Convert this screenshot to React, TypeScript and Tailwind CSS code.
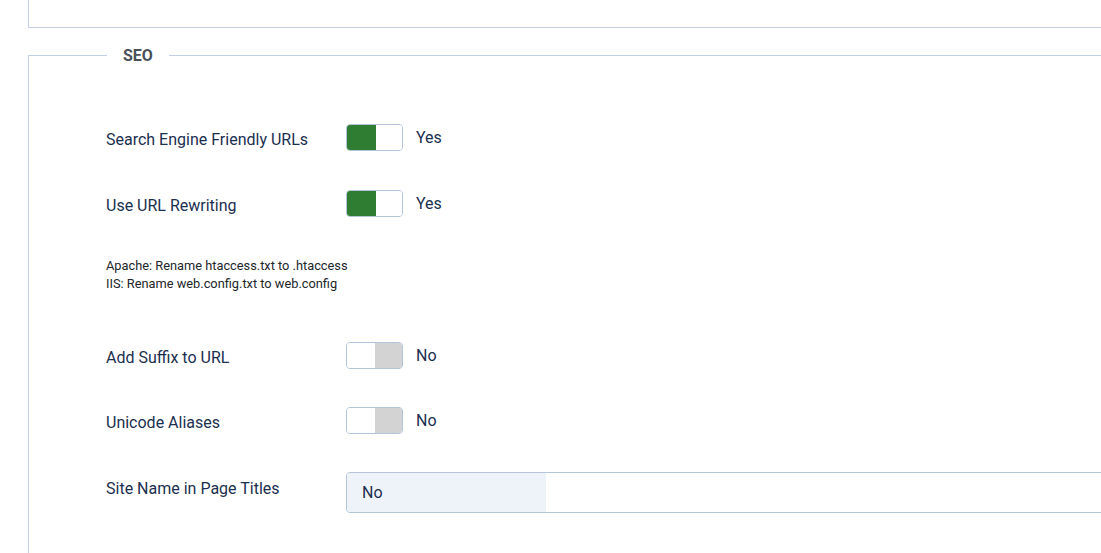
import React from 'react';

type ToggleRow = { label: string; on: boolean };

const FONT = "font-['Roboto','Liberation_Sans',sans-serif]";

function Toggle({ on }: { on: boolean }) {
  return (
    <div className="flex items-center gap-[13px]">
      <div className="flex h-[27px] w-[57px] overflow-hidden rounded-[4px] border border-[#b4c4da] bg-white">
        <span className={on ? 'w-[29px] bg-[#2f7d32]' : 'w-[28px] bg-white'} />
        <span className={on ? 'flex-1 bg-white' : 'flex-1 bg-[#d3d3d3]'} />
      </div>
      <span className="text-[16px] leading-5 text-[#1b2f4f]">{on ? 'Yes' : 'No'}</span>
    </div>
  );
}

function Row({ label, on, className }: ToggleRow & { className?: string }) {
  return (
    <div className={`flex h-[27px] items-center ${className ?? ''}`}>
      <label className="w-[240px] pt-[5px] text-[16px] leading-5 text-[#1b2f4f]">{label}</label>
      <Toggle on={on} />
    </div>
  );
}

export default function App() {
  return (
    <div className={`h-[553px] w-[1101px] overflow-hidden bg-white ${FONT}`}>
      <div className="ml-[28px]">
        {/* previous fieldset tail */}
        <div className="h-[28px] w-[1100px] border-b border-l border-[#c3cfe2]" />

        {/* SEO fieldset */}
        <div className="relative mt-[27px] h-[600px] w-[1100px] border-l border-t border-[#c3cfe2]">
          <span className="absolute -top-[10px] left-[78px] bg-white px-4 text-[16px] font-bold leading-5 text-[#495057]">
            SEO
          </span>

          <div className="flex flex-col pl-[77px] pt-[68px]">
            <Row label="Search Engine Friendly URLs" on={true} />
            <Row label="Use URL Rewriting" on={true} className="mt-[39px]" />

            <div className="mt-[40px] text-[12.8px] leading-[18px] text-[#22262a]">
              <p>Apache: Rename htaccess.txt to .htaccess</p>
              <p>IIS: Rename web.config.txt to web.config</p>
            </div>

            <Row label="Add Suffix to URL" on={false} className="mt-[49px]" />
            <Row label="Unicode Aliases" on={false} className="mt-[38px]" />

            <div className="mt-[38px] flex items-start">
              <label className="w-[240px] pt-[7px] text-[16px] leading-5 text-[#1b2f4f]">Site Name in Page Titles</label>
              <div className="flex h-[41px] flex-1 overflow-hidden rounded-[4px] border border-[#b4c4da] bg-white">
                <span className="flex w-[199px] items-center bg-[#eef3fa] pl-[15px] pt-[1px] text-[16px] text-[#1b2f4f]">No</span>
              </div>
            </div>
          </div>
        </div>
      </div>
    </div>
  );
}
